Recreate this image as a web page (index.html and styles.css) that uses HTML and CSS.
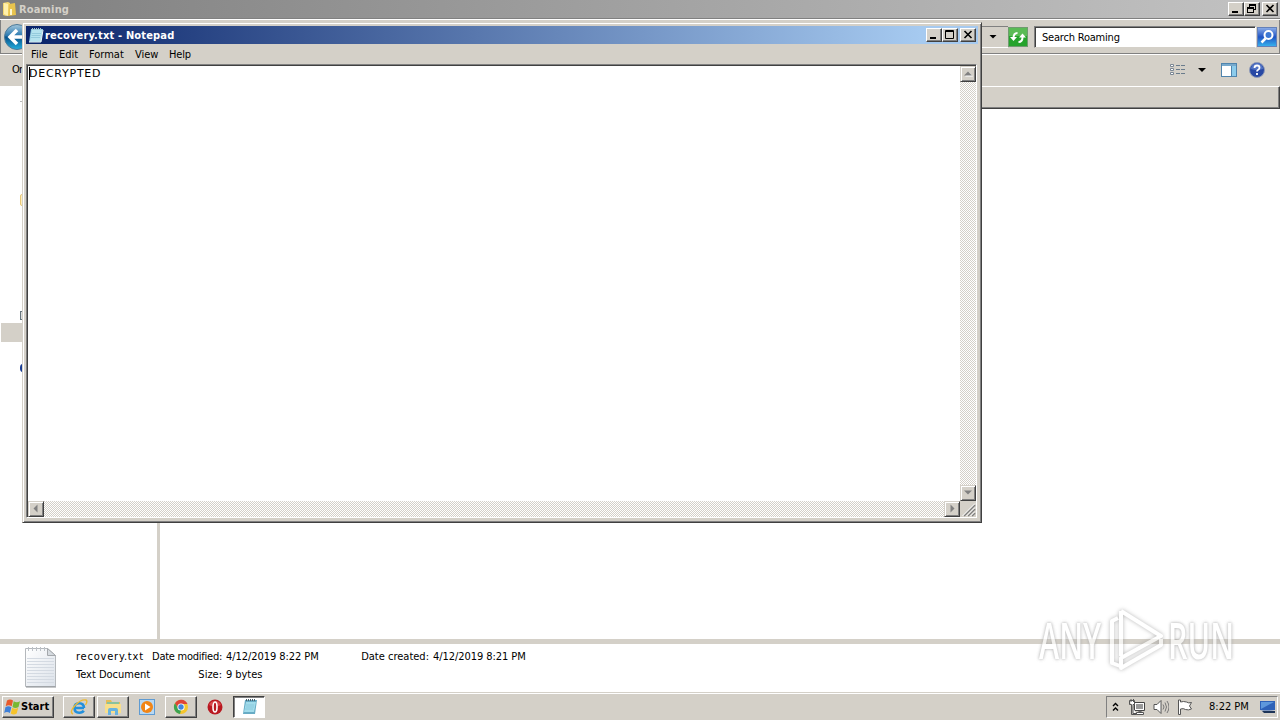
FILE: index.html
```html
<!DOCTYPE html>
<html lang="en">
<head>
  <meta charset="UTF-8">
  <meta name="viewport" content="width=device-width, initial-scale=1.0">
  <title>Desktop</title>
  <link rel="stylesheet" href="styles.css">
</head>
<body>
  <div class="desktop">
    <!-- Explorer window -->
    <div class="explorer">
      <div class="explorer-title">
        <svg class="folder-icon" width="16" height="16" viewBox="0 0 16 16">
          <path d="M1 2l5-1 2 1v12l-4 1-3-1z" fill="#f4d871"/>
          <path d="M7 3l6-1 1 12-8 1z" fill="#e9c44e"/>
          <path d="M2 2l4 1v12l-4-2z" fill="#fff1ac"/>
          <path d="M9 8v6" stroke="#fff8d0" stroke-width="2"/>
        </svg>
        <span class="title-text">Roaming</span>
        <div class="win-buttons">
          <span class="win-btn"><svg width="14" height="12"><path d="M3 9h6" stroke="#000" stroke-width="2"/></svg></span>
          <span class="win-btn"><svg width="14" height="12"><path d="M4 1.500h7M4 2.500h7M4.500 1v4M10.500 1v6M9 6.500h2M2 4.500h7M2 5.500h7M2.500 4v6M8.500 4v6M2 9.500h7" stroke="#000" fill="none"/></svg></span>
          <span class="win-btn close"><svg width="14" height="12"><path d="M3.500 2l7 7M10.500 2l-7 7" stroke="#000" stroke-width="1.600"/></svg></span>
        </div>
      </div>
      <div class="nav-bar">
        <svg class="back-icon" width="26" height="26" viewBox="0 0 26 26">
          <defs>
            <linearGradient id="back" x1="0" y1="0" x2="0" y2="1">
              <stop offset="0" stop-color="#a5c8dc"/>
              <stop offset=".45" stop-color="#2878b0"/>
              <stop offset=".5" stop-color="#075089"/>
              <stop offset="1" stop-color="#25b0df"/>
            </linearGradient>
          </defs>
          <circle cx="13" cy="13" r="12.500" fill="url(#back)" stroke="#4c7896"/>
          <path d="M13 6l-7 7 7 7M7 13h15" fill="none" stroke="#fff" stroke-width="3.500"/>
        </svg>
        <div class="address"><span class="arrow-down"></span></div>
        <svg class="refresh-icon" width="20" height="20" viewBox="0 0 20 20">
          <rect x=".5" y=".5" width="19" height="19" fill="#26a32c" stroke="#6f9b70"/>
          <path d="M1 1h18v8H1z" fill="#5abb55"/>
          <path d="M2 9h7L5.500 13zM11 9.500h7L14.500 5.500z" fill="#fff" transform="translate(0 1)"/>
          <path d="M5.500 11q0-5 4-5M14.500 10q0 5-4 5" fill="none" stroke="#fff" stroke-width="2"/>
        </svg>
        <div class="search-box"><span class="search-text">Search Roaming</span></div>
        <svg class="search-icon" width="20" height="20" viewBox="0 0 20 20">
          <defs>
            <linearGradient id="find" x1="0" y1="0" x2="0" y2="1">
              <stop offset="0" stop-color="#8daee8"/>
              <stop offset=".5" stop-color="#2054c4"/>
              <stop offset="1" stop-color="#38b4ee"/>
            </linearGradient>
          </defs>
          <rect x=".5" y=".5" width="19" height="19" fill="url(#find)" stroke="#6480b8"/>
          <circle cx="11.500" cy="8" r="4" fill="#3c78d4" stroke="#fff" stroke-width="2"/>
          <path d="M8.500 11.500l-4 4" stroke="#fff" stroke-width="2.500"/>
        </svg>
      </div>
      <div class="tool-bar">
        <span class="organize">Or</span>
        <div class="tool-icons">
          <svg width="16" height="14" viewBox="0 0 16 14">
            <g fill="#fff" stroke="#7b8794"><path d="M.500 1.500h3v2h-3zM.500 5.500h3v2h-3zM.500 9.500h3v2h-3z"/></g>
            <path d="M6 2.500h4M11 2.500h4M6 6.500h4M11 6.500h4M6 10.500h4M11 10.500h4" stroke="#6a7c8c"/>
          </svg>
          <span class="arrow-down"></span>
          <svg class="pane-icon" width="16" height="14" viewBox="0 0 16 14">
            <rect x=".5" y=".5" width="15" height="13" fill="#fff" stroke="#4f84ad"/>
            <path d="M1 1h14v2H1z" fill="#77a9cc"/>
            <path d="M11 3h4v10h-4z" fill="#8cccec"/>
            <path d="M10.500 3v10" stroke="#4f84ad"/>
          </svg>
          <svg class="help-icon" width="16" height="16" viewBox="0 0 16 16">
            <circle cx="8" cy="8" r="7.500" fill="#2848a4" stroke="#8f9bb8"/>
            <path d="M2 7a6 6 0 0 1 12 0q-6 2-12 0z" fill="#5273c4"/>
            <path d="M5.500 6q0-2.500 2.500-2.500t2.500 2.200q0 1.300-1.300 2t-1.200 1.800M8 11v2" stroke="#fff" stroke-width="1.800" fill="none"/>
          </svg>
        </div>
      </div>
      <div class="list-header"></div>
      <div class="explorer-body">
        <div class="tree">
          <span class="tree-mark mark-star"></span>
          <span class="tree-mark mark-library"></span>
          <span class="tree-mark mark-computer"></span>
          <span class="tree-selected"></span>
          <span class="tree-mark mark-network"></span>
        </div>
        <div class="files"></div>
      </div>
      <div class="details">
        <svg class="doc-icon" width="34" height="42" viewBox="0 0 34 42">
          <defs>
            <linearGradient id="paper" x1="0" y1="0" x2="1" y2="1">
              <stop offset="0" stop-color="#fff"/>
              <stop offset="1" stop-color="#dce2ea"/>
            </linearGradient>
          </defs>
          <path d="M2.500 2.500h22l8 7v31h-30z" fill="url(#paper)" stroke="#b4b8bc"/>
          <path d="M24.500 2.500v7h8z" fill="#d6dbe0" stroke="#a4a8ac"/>
          <path d="M4 12.500h27M4 15.500h27M4 18.500h27M4 21.500h27M4 24.500h27M4 27.500h27M4 30.500h27M4 33.500h27M4 36.500h27" stroke="#d4dae2"/>
          <path d="M5.500 1v4M9.500 1v4M13.500 1v4M17.500 1v4M21.500 1v4" stroke="#bcc1c7"/>
          <path d="M3 41h30" stroke="#8c9094"/>
        </svg>
        <div class="details-grid">
          <span class="file-name">recovery.txt</span>
          <span class="label mod-label">Date modified:</span>
          <span class="date">4/12/2019 8:22 PM</span>
          <span class="label">Date created:</span>
          <span class="date">4/12/2019 8:21 PM</span>
          <span class="file-type">Text Document</span>
          <span class="label">Size:</span>
          <span class="bytes">9 bytes</span>
        </div>
      </div>
    </div>

    <!-- Notepad window -->
    <div class="notepad">
      <div class="notepad-title">
        <svg class="note-icon" width="16" height="16" viewBox="0 0 16 16">
          <path d="M3 2h12l-2 13H1z" fill="#90cde0"/>
          <path d="M4 3h10l-1 11H2z" fill="#b5e3ee"/>
          <path d="M4 6.500h9M3.500 8.500h9M3 10.500h9" stroke="#94cbdc"/>
          <path d="M4.500 1v2M6.500 1v2M8.500 1v2M10.500 1v2M12.500 1v2" stroke="#a9c4d0"/>
          <path d="M1 15h12l2-12" stroke="#eef7fa" fill="none"/>
        </svg>
        <span class="title-text">recovery.txt - Notepad</span>
        <div class="win-buttons">
          <span class="win-btn"><svg width="14" height="12"><path d="M3 9h6" stroke="#000" stroke-width="2"/></svg></span>
          <span class="win-btn"><svg width="14" height="12"><path d="M2.500 1.500h8v8h-8zM2 2.500h9" stroke="#000" fill="none"/></svg></span>
          <span class="win-btn close"><svg width="14" height="12"><path d="M3.500 2l7 7M10.500 2l-7 7" stroke="#000" stroke-width="1.600"/></svg></span>
        </div>
      </div>
      <div class="menu">
        <span class="menu-file">File</span>
        <span class="menu-edit">Edit</span>
        <span class="menu-format">Format</span>
        <span class="menu-view">View</span>
        <span class="menu-help">Help</span>
      </div>
      <div class="editor">
        <div class="text"><span class="caret"></span><span class="content">DECRYPTED</span></div>
        <div class="scroll-v">
          <span class="scroll-btn"><svg width="12" height="12"><path d="M3 8.500h8L7 4.500z" fill="#fff"/><path d="M2 7.500h8L6 3.500z" fill="#808080"/></svg></span>
          <span class="scroll-btn"><svg width="12" height="12"><path d="M2 3.500h8L6 7.500z" fill="#808080"/></svg></span>
        </div>
        <div class="scroll-h">
          <span class="scroll-btn"><svg width="12" height="12"><path d="M7.500 1.500v8L3.500 5.500z" fill="#808080"/></svg></span>
          <span class="scroll-btn"><svg width="12" height="12"><path d="M4.500 1.500v8L8.500 5.500z" fill="#808080"/></svg></span>
        </div>
        <svg class="grip" width="16" height="16">
          <path d="M4 15L15 4M8 15l7-7M12 15l3-3" stroke="#808080" stroke-width="1.600"/>
          <path d="M2.500 15L15 2.500M6.500 15L15 6.500M10.500 15l4.500-4.500" stroke="#fff"/>
        </svg>
      </div>
    </div>

    <!-- Taskbar -->
    <div class="taskbar">
      <div class="start">
        <svg width="17" height="16" viewBox="0 0 17 16">
          <path d="M3 1.500q3-2 6 0L7.700 7.300q-3-2-6 0z" fill="#e8592b"/>
          <path d="M9.700 2.200q3 2 6.300 0L14.500 8q-3 2-6 0z" fill="#78b832"/>
          <path d="M1.400 8.200q3-2 6 0L5.900 14q-3-2-5.700 0z" fill="#3f80d8"/>
          <path d="M8.200 8.800q3 2 6 0l-1.500 5.700q-3 2-6 0z" fill="#f6c32a"/>
        </svg>
        <span>Start</span>
      </div>
      <div class="task raised ie">
        <svg width="18" height="18" viewBox="0 0 18 18">
          <path d="M14 10H5.500M14 10q0-4.800-4.800-4.800T4.500 10t4.900 4.700q3.200 0 4.300-2" fill="none" stroke="#2390dc" stroke-width="2.600"/>
          <path d="M3 16Q-1 14 5 7.500T16 2q2 1-.5 5" fill="none" stroke="#edba32" stroke-width="1.400"/>
        </svg>
      </div>
      <div class="task raised explorer-task">
        <svg width="18" height="18" viewBox="0 0 18 18">
          <path d="M2 2h5l1 2h8v11H2z" fill="#e5bd57"/>
          <path d="M3 4h12v4H3z" fill="#8ac29d"/>
          <path d="M1 6h16v9H1z" fill="#f8df8b"/>
          <path d="M4 17v-5q0-2 2-2h6q2 0 2 2v5h-3v-4H7v4z" fill="#68b3df"/>
        </svg>
      </div>
      <div class="task flat">
        <svg width="16" height="16" viewBox="0 0 16 16">
          <rect x=".5" y=".5" width="15" height="15" fill="#b8d8f2" stroke="#5f9bd2"/>
          <circle cx="8" cy="8" r="6" fill="#f18516"/>
          <path d="M6 4.500v7l5.500-3.500z" fill="#fff"/>
        </svg>
      </div>
      <div class="task raised">
        <svg width="16" height="16" viewBox="0 0 16 16">
          <circle cx="8" cy="8" r="7" fill="#f5c62d"/>
          <path d="M2 4.300A7 7 0 0 1 14.500 5H8L5 9.500z" fill="#df4436"/>
          <path d="M2 4.300L5.500 10 8 11l-1 4A7 7 0 0 1 2 4.300z" fill="#3ca351"/>
          <circle cx="8" cy="8" r="3.600" fill="#fff"/>
          <circle cx="8" cy="8" r="2.700" fill="#4285dc"/>
        </svg>
      </div>
      <div class="task flat">
        <svg width="16" height="16" viewBox="0 0 16 16">
          <circle cx="8" cy="8" r="7.500" fill="#b91820"/>
          <path d="M2 6a6.500 6.500 0 0 1 12 0q-6 3-12 0z" fill="#d8474c"/>
          <ellipse cx="8" cy="8" rx="2" ry="5" fill="#b91820" stroke="#fff" stroke-width="1.600"/>
        </svg>
      </div>
      <div class="task pressed">
        <svg width="18" height="18" viewBox="0 0 18 18">
          <path d="M5 2h12l-2 14H3z" fill="#68acc5"/>
          <path d="M6 4h10l-2 10H4z" fill="#a2dceb"/>
          <path d="M6 7h8M6 9h8M5 11h8" stroke="#8acade"/>
          <path d="M6.500 1v2M8.500 1v2M10.500 1v2M12.500 1v2M14.500 1v2" stroke="#49616d"/>
        </svg>
      </div>
      <div class="tray">
        <svg class="chevrons" width="7" height="10" viewBox="0 0 7 10"><path d="M1 4l2.500-2.500L6 4M1 8.500L3.500 6 6 8.500" stroke="#000" stroke-width="1.400" fill="none"/></svg>
        <svg class="tray-network" width="16" height="16" viewBox="0 0 16 16">
          <path d="M5.500 3.500h10v8h-10z" fill="#fff" stroke="#444"/>
          <path d="M7 5h7v5H7z" fill="#999"/>
          <path d="M7.500 13.500h7v2h-7zM10 12h2v1h-2z" fill="#fff" stroke="#555"/>
          <path d="M.500 1.500h5v4h-1.500v9h3" fill="#fff" stroke="#555"/>
          <path d="M.500 1.500v4h2v10h5M2 0v3M4.500 0v3" fill="none" stroke="#555"/>
        </svg>
        <svg class="tray-sound" width="16" height="16" viewBox="0 0 16 16">
          <path d="M1 5.500h3L8 1.500v13l-4-4H1z" fill="#fff" stroke="#555"/>
          <path d="M10 5.500q2 2.500 0 5M12 3.500q3 4.500 0 9M14 2q4 6 0 12" stroke="#777" fill="none"/>
        </svg>
        <svg class="tray-flag" width="16" height="16" viewBox="0 0 16 16">
          <path d="M1.500 1v14.500h2V10q3-1 5 .5 3 1 6-.5l-2-3 2-3.500q-3 1-5-.5-3-1-6 0V1z" fill="#fff" stroke="#555"/>
        </svg>
        <span class="clock">8:22 PM</span>
        <svg class="show-desktop" width="16" height="14" viewBox="0 0 16 14">
          <path d="M0 1h15v9q-8 1-15 0z" fill="#2e62b8"/>
          <path d="M1 2h13L1 9z" fill="#5e98dc"/>
          <path d="M2 11h13v2H4z" fill="#1e3558"/>
        </svg>
      </div>
    </div>

    <!-- Watermark -->
    <div class="watermark">
      <span class="mark-any">ANY</span>
      <svg class="mark-logo" width="69" height="68" viewBox="0 0 69 68">
        <path d="M17 12l-6 3v42l8 3M20 5v45M20 5l40 25-40 22v10l40-23v-6" fill="none" stroke="#fff" stroke-width="4" stroke-linejoin="round"/>
      </svg>
      <span class="mark-run">RUN</span>
    </div>
  </div>
</body>
</html>
```

FILE: styles.css
```css
* {
  box-sizing: border-box;
}
body {
  margin: 0;
  overflow: hidden;
  font-family: "DejaVu Sans Condensed", "DejaVu Sans", sans-serif;
  font-size: 11px;
  line-height: 14px;
  color: #000;
}
svg {
  display: block;
  flex: none;
}
span {
  white-space: nowrap;
}
.desktop {
  position: relative;
  width: 1280px;
  height: 720px;
  display: flex;
  flex-direction: column;
  background: #fff;
  overflow: hidden;
}
.explorer {
  height: 692px;
  display: flex;
  flex-direction: column;
}
.explorer-title {
  height: 18px;
  display: flex;
  align-items: center;
  padding: 0 2px;
  background: linear-gradient(to right, #808080, #c0c0c0 96%);
  color: #d4d0c8;
}
.title-text {
  flex: 1;
  margin-left: 1px;
  padding-top: 1px;
  font-size: 11px;
  font-weight: bold;
  letter-spacing: 0.17px;
}
.win-buttons {
  display: flex;
}
.win-btn {
  width: 16px;
  height: 14px;
  background: #d4d0c8;
  border: 1px solid;
  border-color: #fff #404040 #404040 #fff;
  box-shadow: inset -1px -1px #808080;
}
.close {
  margin-left: 2px;
}
.nav-bar {
  height: 37px;
  display: flex;
  align-items: center;
  padding-left: 4px;
  background: #d4d0c8;
  border-top: 1px solid #808080;
  border-bottom: 1px solid #fff;
  box-shadow: inset 0 1px #fff, inset 1px 0 #808080, inset -1px -1px #808080;
}
.address {
  flex: 1;
  height: 22px;
  display: flex;
  align-items: center;
  justify-content: flex-end;
  padding-right: 11px;
  border-top: 1px solid #808080;
  border-bottom: 1px solid #fff;
}
.arrow-down {
  width: 8px;
  height: 4px;
  background: #000;
  clip-path: polygon(0 0, 100% 0, 50% 100%);
}
.search-box {
  width: 222px;
  height: 22px;
  margin: 0 1px 0 6px;
  padding: 4px 7px 0;
  background: #fff;
  border: 1px solid;
  border-color: #808080 #fff #d4d0c8 #808080;
  box-shadow: inset 1px 1px #404040;
}
.search-text {
  letter-spacing: -0.2px;
}
.search-icon {
  margin-right: 3px;
}
.tool-bar {
  height: 31px;
  display: flex;
  align-items: center;
  justify-content: space-between;
  padding: 0 15px 1px 12px;
  background: #d4d0c8;
}
.organize {
  letter-spacing: -0.8px;
}
.tool-icons {
  display: flex;
  align-items: center;
}
.tool-icons .arrow-down {
  margin: 0 15px 0 12px;
}
.help-icon {
  margin-left: 12px;
}
.list-header {
  height: 23px;
  background: #d4d0c8;
  border: 1px solid;
  border-color: #fff #404040 #404040 #fff;
  box-shadow: inset -1px -1px #808080;
}
.explorer-body {
  flex: 1;
  display: flex;
}
/* the folder tree reaches up beside the column header */
.tree {
  width: 160px;
  margin-top: -23px;
  padding: 15px 0 0 1px;
  background: #fff;
  border-right: 3px solid #d4d0c8;
}
.tree-mark {
  display: block;
  width: 5px;
  margin-left: 19px;
}
.mark-star {
  height: 1px;
  background: #b8b8b8;
}
.mark-library {
  height: 12px;
  margin-top: 92px;
  border: 1px solid #e9c878;
  border-radius: 2px;
  background: #fff0c0;
}
.mark-computer {
  height: 9px;
  margin-top: 105px;
  border: 1px solid #66747c;
  background: #ddd;
}
.tree-selected {
  display: block;
  height: 19px;
  width: 22px;
  margin-top: 3px;
  background: #d4d0c8;
}
.mark-network {
  height: 8px;
  margin-top: 22px;
  border-radius: 50%;
  background: #173b93;
}
.files {
  flex: 1;
}
.details {
  height: 53px;
  display: flex;
  padding: 2px 0 0 23px;
  border-top: 5px solid #d4d0c8;
  background: #fff;
}
.details-grid {
  display: grid;
  grid-template-columns: 76px 70px 140px 67px 100px;
  grid-template-rows: 18px 18px;
  margin: 4px 0 0 19px;
}
.file-name {
  letter-spacing: 0.78px;
}
.label {
  justify-self: end;
}
.mod-label {
  letter-spacing: -0.25px;
}
.date,
.bytes {
  padding-left: 4px;
  letter-spacing: -0.06px;
}
.notepad {
  position: absolute;
  left: 22px;
  top: 22px;
  width: 960px;
  height: 501px;
  padding: 3px;
  background: #d4d0c8;
  border: 1px solid;
  border-color: #d4d0c8 #404040 #404040 #d4d0c8;
  box-shadow: inset 1px 1px #fff, inset -1px -1px #808080;
}
.notepad-title {
  height: 18px;
  display: flex;
  align-items: center;
  padding: 0 2px;
  background: linear-gradient(to right, #0a246a, #a6caf0 94%);
  color: #fff;
}
.menu {
  height: 21px;
  display: flex;
  padding: 4px 5px 0;
  gap: 12px;
}
.menu-file { width: 16px; }
.menu-edit { width: 18px; }
.menu-format { width: 34px; }
.menu-view { width: 22px; }
.menu-help { letter-spacing: -0.2px; }
.editor {
  height: 454px;
  width: 951px;
  margin-top: -1px;
  display: grid;
  grid-template-columns: 1fr 16px;
  grid-template-rows: 1fr 16px;
  border: 1px solid;
  border-color: #808080 #fff #fff #808080;
  box-shadow: inset 1px 1px #404040;
  padding: 1px 0 0 1px;
}
.text {
  display: flex;
  background: #fff;
  padding: 1px 0 0 1px;
}
.caret {
  width: 1px;
  height: 13px;
  background: #000;
}
.content {
  margin-left: -1px;
  font-family: "DejaVu Sans", sans-serif;
  font-size: 11px;
  line-height: 13px;
  letter-spacing: 0.75px;
}
.scroll-v,
.scroll-h {
  display: flex;
  justify-content: space-between;
  background: repeating-conic-gradient(#fff 0 25%, #d4d0c8 0 50%) 0 0 / 2px 2px;
}
.scroll-v {
  flex-direction: column;
}
.scroll-btn {
  width: 16px;
  height: 16px;
  padding: 1px;
  background: #d4d0c8;
  border: 1px solid;
  border-color: #d4d0c8 #404040 #404040 #d4d0c8;
  box-shadow: inset 1px 1px #fff, inset -1px -1px #808080;
}
.grip {
  background: #d4d0c8;
}
.taskbar {
  height: 28px;
  display: flex;
  align-items: flex-start;
  padding: 3px 0 0 2px;
  background: #d4d0c8;
  border-top: 1px solid #d4d0c8;
  box-shadow: inset 0 1px #fff;
}
.start,
.raised {
  border: 1px solid;
  border-color: #fff #404040 #404040 #fff;
  box-shadow: inset -1px -1px #808080;
}
.start {
  width: 52px;
  height: 22px;
  display: flex;
  align-items: center;
  padding-left: 1px;
  margin-right: 9px;
  font-weight: bold;
}
.task {
  width: 32px;
  height: 22px;
  display: flex;
  align-items: center;
  justify-content: center;
}
.explorer-task {
  margin-left: 2px;
}
.flat {
  width: 36px;
}
.task.pressed {
  background: #fff;
  border: 1px solid;
  border-color: #404040 #fff #fff #404040;
  box-shadow: inset 1px 1px #808080;
}
.tray {
  flex: 0 0 172px;
  height: 22px;
  margin: 0 2px 0 auto;
  display: flex;
  align-items: center;
  padding: 0 1px 0 5px;
  border: 1px solid;
  border-color: #808080 #fff #fff #808080;
}
.tray-network {
  margin-left: 10px;
}
.tray-sound,
.tray-flag {
  margin-left: 8px;
}
.clock {
  margin-left: 16px;
}
.show-desktop {
  margin-left: auto;
}
.watermark {
  position: absolute;
  left: 1039px;
  top: 606px;
  width: 194px;
  display: flex;
  align-items: center;
  opacity: 0.7;
  color: #fff;
  font-family: "Open Sans", sans-serif;
  font-size: 50px;
  font-weight: 600;
  line-height: 68px;
  text-shadow: 0 0 4px #aaa, 0 0 4px #aaa;
}
.mark-any,
.mark-run {
  flex: none;
  width: 62px;
  transform: scaleX(0.61);
  transform-origin: left;
}
.mark-run {
  margin-left: -2px;
}
.mark-logo {
  filter: drop-shadow(0 0 2px #999);
}
```
